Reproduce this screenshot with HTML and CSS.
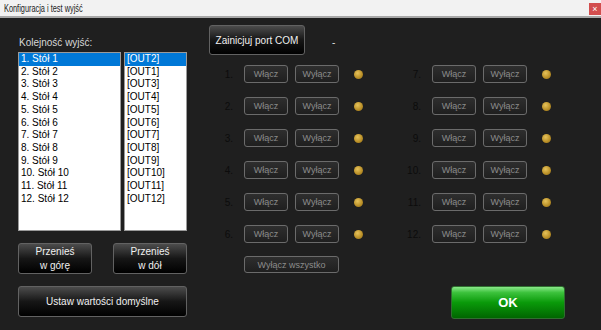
FILE: index.html
```html
<!DOCTYPE html>
<html lang="pl">
<head>
  <meta charset="UTF-8">
  <title>Konfiguracja i test wyjść</title>
  <link rel="stylesheet" href="styles.css">
</head>
<body>
  <div class="titlebar">
    <span class="title">Konfiguracja i test wyjść</span>
    <span class="close">×</span>
  </div>

  <div class="main">
    <div class="left">
      <div class="caption">Kolejność wyjść:</div>
      <div class="lists">
        <ul class="list names">
          <li class="selected">1. Stół 1</li>
          <li>2. Stół 2</li>
          <li>3. Stół 3</li>
          <li>4. Stół 4</li>
          <li>5. Stół 5</li>
          <li>6. Stół 6</li>
          <li>7. Stół 7</li>
          <li>8. Stół 8</li>
          <li>9. Stół 9</li>
          <li>10. Stół 10</li>
          <li>11. Stół 11</li>
          <li>12. Stół 12</li>
        </ul>
        <ul class="list outs">
          <li class="selected">[OUT2]</li>
          <li>[OUT1]</li>
          <li>[OUT3]</li>
          <li>[OUT4]</li>
          <li>[OUT5]</li>
          <li>[OUT6]</li>
          <li>[OUT7]</li>
          <li>[OUT8]</li>
          <li>[OUT9]</li>
          <li>[OUT10]</li>
          <li>[OUT11]</li>
          <li>[OUT12]</li>
        </ul>
      </div>
      <div class="move">
        <button class="dark move-btn">Przenieś<br>w górę</button>
        <button class="dark move-btn">Przenieś<br>w dół</button>
      </div>
      <button class="dark defaults">Ustaw wartości domyślne</button>
    </div>

    <div class="right">
      <div class="com-row">
        <button class="dark com">Zainicjuj port COM</button>
        <span class="dash">-</span>
      </div>
      <div class="outputs">
        <div class="col">
          <div class="row"><span class="num">1.</span><button class="small">Włącz</button><button class="small">Wyłącz</button><span class="led"></span></div>
          <div class="row"><span class="num">2.</span><button class="small">Włącz</button><button class="small">Wyłącz</button><span class="led"></span></div>
          <div class="row"><span class="num">3.</span><button class="small">Włącz</button><button class="small">Wyłącz</button><span class="led"></span></div>
          <div class="row"><span class="num">4.</span><button class="small">Włącz</button><button class="small">Wyłącz</button><span class="led"></span></div>
          <div class="row"><span class="num">5.</span><button class="small">Włącz</button><button class="small">Wyłącz</button><span class="led"></span></div>
          <div class="row"><span class="num">6.</span><button class="small">Włącz</button><button class="small">Wyłącz</button><span class="led"></span></div>
          <button class="small all-off">Wyłącz wszystko</button>
        </div>
        <div class="col">
          <div class="row"><span class="num">7.</span><button class="small">Włącz</button><button class="small">Wyłącz</button><span class="led"></span></div>
          <div class="row"><span class="num">8.</span><button class="small">Włącz</button><button class="small">Wyłącz</button><span class="led"></span></div>
          <div class="row"><span class="num">9.</span><button class="small">Włącz</button><button class="small">Wyłącz</button><span class="led"></span></div>
          <div class="row"><span class="num">10.</span><button class="small">Włącz</button><button class="small">Wyłącz</button><span class="led"></span></div>
          <div class="row"><span class="num">11.</span><button class="small">Włącz</button><button class="small">Wyłącz</button><span class="led"></span></div>
          <div class="row"><span class="num">12.</span><button class="small">Włącz</button><button class="small">Wyłącz</button><span class="led"></span></div>
          <button class="ok">OK</button>
        </div>
      </div>
    </div>
  </div>
</body>
</html>
```

FILE: styles.css
```css
body {
  margin: 0;
  height: 330px;
  background: #1f1f1f;
  font-family: "Liberation Sans", Arial, sans-serif;
  font-size: 10px;
  overflow: hidden;
}

button {
  font-family: "Liberation Sans", Arial, sans-serif;
  padding: 0;
  margin: 0;
  cursor: pointer;
}

.titlebar {
  height: 16px;
  background: #f2f2f2;
  border-bottom: 2px solid #a8a8a8;
  display: flex;
  align-items: center;
  justify-content: space-between;
}

.title {
  padding-left: 4px;
  font-size: 11px;
  color: #222;
  transform: scaleX(0.67);
  transform-origin: 4px 50%;
  white-space: nowrap;
}

.close {
  width: 12px;
  height: 12px;
  margin-top: 1px;
  background: #d24e4e;
  color: #fff;
  font-size: 9px;
  line-height: 12px;
  text-align: center;
}

.main {
  display: flex;
  gap: 22px;
  padding-left: 18px;
}

/* left panel */
.left {
  width: 169px;
  display: flex;
  flex-direction: column;
}

.caption {
  margin-top: 18px;
  padding-left: 1px;
  line-height: 14px;
  color: #d8d8d8;
}

.lists {
  display: flex;
  gap: 3px;
  margin-top: 2px;
}

.list {
  list-style: none;
  margin: 0;
  padding: 0;
  height: 177px;
  background: #fff;
  border: 1px solid #9a9a9a;
  color: #000;
}

.list li {
  line-height: 12.7px;
  padding-left: 2px;
}

.list li.selected {
  background: #0078d7;
  color: #fff;
}

.names {
  width: 101px;
}

.outs {
  width: 61px;
}

.dark {
  background: linear-gradient(#4c4c4c, #161616 50%, #000);
  border: 1px solid #626262;
  border-radius: 3px;
  color: #f0f0f0;
  font-size: 10px;
}

.move {
  display: flex;
  justify-content: space-between;
  margin-top: 12px;
}

.move-btn {
  width: 74px;
  height: 31px;
  line-height: 14px;
}

.defaults {
  margin-top: 12px;
  width: 169px;
  height: 31px;
}

/* right panel */
.com-row {
  display: flex;
  align-items: center;
  margin-top: 7px;
}

.com {
  width: 96px;
  height: 30px;
}

.dash {
  margin-left: 27px;
  padding-top: 5px;
  color: #e0e0e0;
}

.outputs {
  display: flex;
  gap: 33px;
  margin-top: 10px;
}

.col {
  width: 155px;
  display: flex;
  flex-direction: column;
  gap: 14px;
}

.row {
  display: flex;
  align-items: center;
  height: 18px;
}

.num {
  width: 24px;
  margin-right: 11px;
  text-align: right;
  color: #0c0c0c;
  font-size: 10px;
}

.small {
  width: 44px;
  height: 18px;
  background: linear-gradient(#2e2e2e, #1f1f1f);
  border: 1px solid #6b6b6b;
  border-radius: 3px;
  color: #8c8c8c;
  font-size: 9px;
}

.row .small + .small {
  margin-left: 7px;
}

.led {
  width: 9px;
  height: 9px;
  margin-left: 15px;
  border-radius: 50%;
  background: radial-gradient(circle at 40% 35%, #e6c25a, #b88e26 60%, #8a6818);
}

.all-off {
  width: 95px;
  height: 17px;
  margin-left: 35px;
  margin-top: -1px;
}

.ok {
  width: 114px;
  height: 33px;
  margin-left: 54px;
  margin-top: 29px;
  background: linear-gradient(#8ae88a, #3cc23c 18%, #0a9a0a 50%, #006600);
  border: 1px solid #2f6f2f;
  border-radius: 3px;
  color: #fff;
  font-size: 13px;
  font-weight: bold;
}
```
